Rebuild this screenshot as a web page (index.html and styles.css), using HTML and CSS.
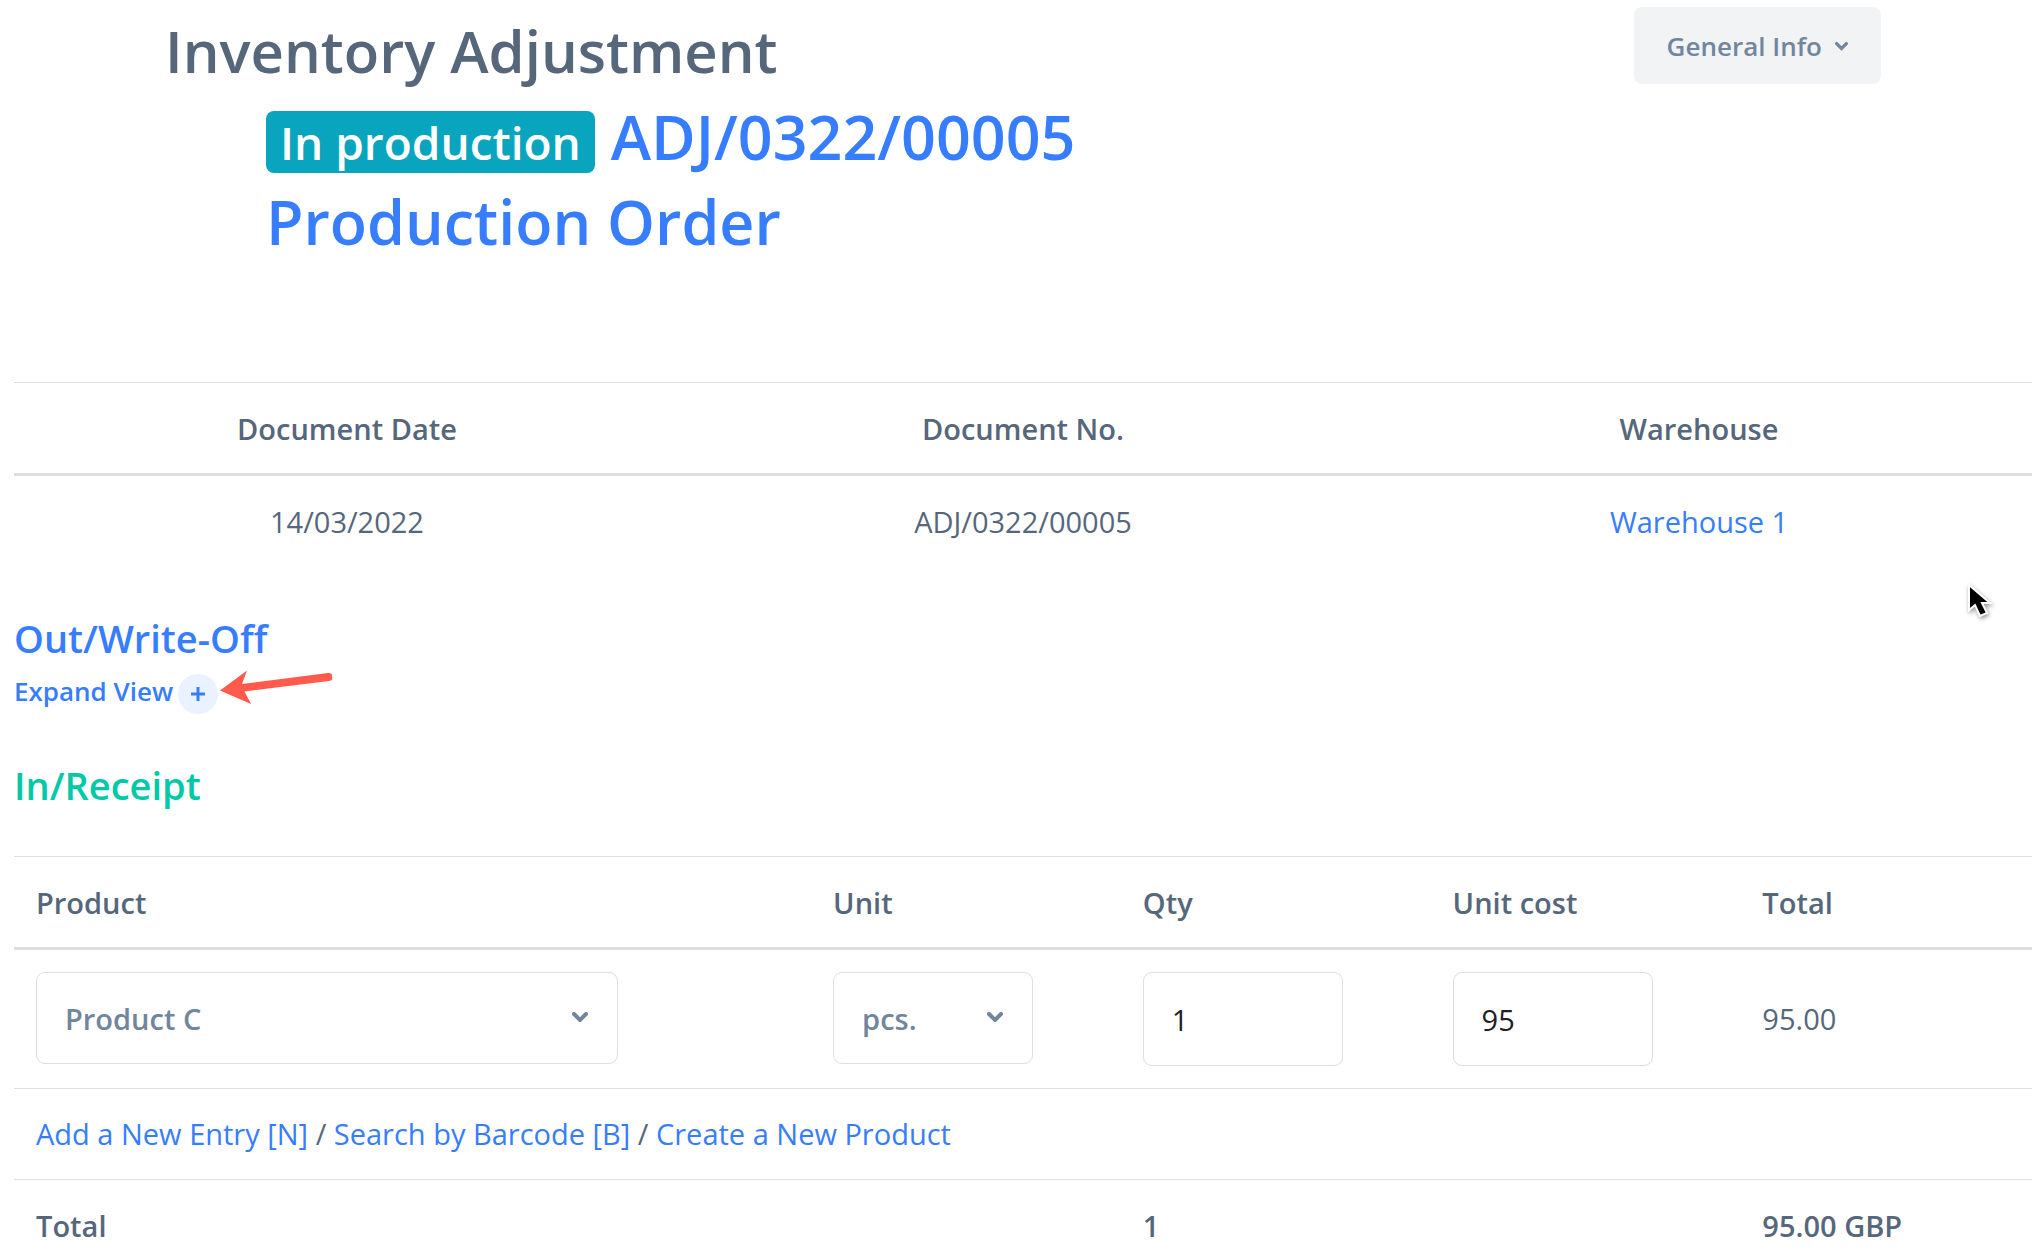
FILE: index.html
```
<!DOCTYPE html>
<html lang="en">
<head>
  <meta charset="UTF-8">
  <meta name="viewport" content="width=device-width, initial-scale=1.0">
  <title>Inventory Adjustment</title>
  <link rel="stylesheet" href="styles.css">
</head>
<body>
  <div class="container">
    <header class="page-header">
      <div class="headings">
        <h1 class="title">Inventory Adjustment</h1>
        <h2 class="subtitle"><span class="badge">In production</span> <a href="#">ADJ/0322/00005</a><br><a href="#">Production Order</a></h2>
      </div>
      <button type="button" class="btn-info">
        General Info
        <svg class="chevron" viewBox="0 0 16 10"><path d="M2 2l6 6 6-6"/></svg>
      </button>
    </header>

    <table class="table document">
      <colgroup>
        <col class="col-side">
        <col class="col-middle">
        <col class="col-side">
      </colgroup>
      <thead>
        <tr>
          <th>Document Date</th>
          <th>Document No.</th>
          <th>Warehouse</th>
        </tr>
      </thead>
      <tbody>
        <tr>
          <td>14/03/2022</td>
          <td>ADJ/0322/00005</td>
          <td><a href="#">Warehouse 1</a></td>
        </tr>
      </tbody>
    </table>

    <section class="section">
      <h3 class="section-title">Out/Write-Off</h3>
      <div class="expand-row">
        <button type="button" class="btn-expand">
          Expand View
          <span class="plus"><svg viewBox="0 0 16 16"><path d="M8 1v14M1 8h14"/></svg></span>
        </button>
        <svg class="arrow" viewBox="0 0 112 36"><path d="M0 20.5L27 .5l-5 13.5 86-11a4 4 0 0 1 1 8L24.500 21.500 31 34z"/></svg>
      </div>
    </section>

    <section class="section">
      <h3 class="section-title receipt">In/Receipt</h3>
      <table class="table products">
        <colgroup>
          <col class="col-product">
          <col class="col-value">
          <col class="col-value">
          <col class="col-value">
          <col>
        </colgroup>
        <thead>
          <tr>
            <th id="product">Product</th>
            <th id="unit">Unit</th>
            <th id="qty">Qty</th>
            <th id="cost">Unit cost</th>
            <th>Total</th>
          </tr>
        </thead>
        <tbody>
          <tr class="entry">
            <td>
              <div class="select select-product">
                <select aria-labelledby="product"><option>Product C</option></select>
                <svg class="chevron" viewBox="0 0 16 10"><path d="M2 2l6 6 6-6"/></svg>
              </div>
            </td>
            <td>
              <div class="select">
                <select aria-labelledby="unit"><option>pcs.</option></select>
                <svg class="chevron" viewBox="0 0 16 10"><path d="M2 2l6 6 6-6"/></svg>
              </div>
            </td>
            <td><input type="text" value="1" aria-labelledby="qty"></td>
            <td><input type="text" value="95" aria-labelledby="cost"></td>
            <td class="sum">95.00</td>
          </tr>
          <tr>
            <td colspan="5"><a href="#">Add a New Entry [N]</a> / <a href="#">Search by Barcode [B]</a> / <a href="#">Create a New Product</a></td>
          </tr>
        </tbody>
        <tfoot>
          <tr>
            <th colspan="2">Total</th>
            <th colspan="2">1</th>
            <th>95.00 GBP</th>
          </tr>
        </tfoot>
      </table>
    </section>
  </div>

  <svg class="cursor" viewBox="0 0 26 40"><path d="M4 3v25l6-5 5 11 7-3-5-10h8z"/></svg>
</body>
</html>
```

FILE: styles.css
```
* {
  box-sizing: border-box;
}
body {
  margin: 0;
  font-family: "Open Sans", "Noto Sans", sans-serif;
  font-size: 29px;
  line-height: 46px;
  color: #56677b;
  background-color: #fff;
  position: relative;
  overflow: hidden;
}
a {
  color: #377dff;
  text-decoration: none;
}
h1, h2, h3 {
  margin: 0;
  font-weight: 600;
}
button, input, select {
  font-family: inherit;
  margin: 0;
}
.container {
  padding: 7px 8px 0 14px;
}

/* header */
.page-header {
  display: flex;
  justify-content: space-between;
  align-items: flex-start;
  padding: 0 151px;
  margin-bottom: 118px;
}
.title {
  font-size: 58px;
  line-height: 87px;
}
.subtitle {
  margin-left: 101px;
  font-size: 61px;
  line-height: 85px;
}
.badge {
  display: inline-block;
  padding: 8px 14px;
  border-radius: 8px;
  background-color: #09a5be;
  color: #fff;
  font-size: 46px;
  line-height: 46px;
}
.btn-info {
  display: flex;
  align-items: center;
  gap: 13px;
  height: 77px;
  padding: 0 33px;
  border: none;
  border-radius: 8px;
  background-color: #f1f3f5;
  color: #71869d;
  font-size: 26px;
  font-weight: 600;
  line-height: 34px;
}
.chevron {
  width: 16px;
  height: 10px;
  fill: none;
  stroke: #71869d;
  stroke-width: 4;
  stroke-linecap: round;
}
.btn-info .chevron {
  width: 13px;
}

/* tables */
.table {
  width: 100%;
  table-layout: fixed;
  border-spacing: 0;
  text-align: left;
}
.table th,
.table td {
  padding: 22px;
  border-top: 1px solid #dedede;
  vertical-align: top;
}
.table th {
  padding: 23px 22px 21px;
  font-weight: 600;
}
.table thead th {
  border-bottom: 3px solid #dedede;
}
.table tbody tr:first-child td {
  border-top: none;
}
.document {
  text-align: center;
}
.document td {
  padding-top: 23px;
}
.col-side {
  width: 33%;
}
.col-middle {
  width: 34%;
}
.col-product {
  width: 39.5%;
}
.col-value {
  width: 15.35%;
}
.table .sum {
  vertical-align: middle;
}

/* sections */
.section {
  margin-top: 45px;
}
.section-title {
  font-size: 38px;
  line-height: 53px;
  color: #377dff;
}
.receipt {
  margin-bottom: 44px;
  color: #00c9a7;
}
.expand-row {
  display: flex;
  position: relative;
  margin-top: 9px;
}
.btn-expand {
  display: flex;
  align-items: flex-start;
  gap: 5px;
  padding: 0;
  border: none;
  background: none;
  color: #377dff;
  font-size: 26px;
  font-weight: 600;
  line-height: 34px;
}
.plus {
  display: flex;
  align-items: center;
  justify-content: center;
  width: 40px;
  height: 40px;
  border-radius: 50%;
  background-color: #ebf2ff;
}
.plus svg {
  width: 16px;
  height: 16px;
  stroke: #377dff;
  stroke-width: 3;
}
.arrow {
  position: absolute;
  left: 206px;
  top: -4px;
  width: 112px;
  height: 36px;
  fill: #ff5a4c;
}

/* form controls */
.select {
  position: relative;
  width: 200px;
}
.select-product {
  width: 582px;
}
.select select,
.entry input {
  display: block;
  border: 1px solid #dedede;
  border-radius: 9px;
  background-color: #fff;
  padding: 0 28px;
  font-size: 29px;
}
.select select {
  appearance: none;
  width: 100%;
  height: 92px;
  color: #71869d;
  font-weight: 600;
}
.select .chevron {
  position: absolute;
  right: 30px;
  top: 40px;
  pointer-events: none;
}
.entry input {
  width: 200px;
  height: 94px;
  color: #1e2022;
}

.cursor {
  position: absolute;
  right: 49px;
  top: 582px;
  width: 26px;
  height: 40px;
  fill: #000;
  stroke: #fff;
  stroke-width: 2;
  overflow: visible;
  filter: drop-shadow(1px 2px 2px rgba(0, 0, 0, 0.4));
}
```
